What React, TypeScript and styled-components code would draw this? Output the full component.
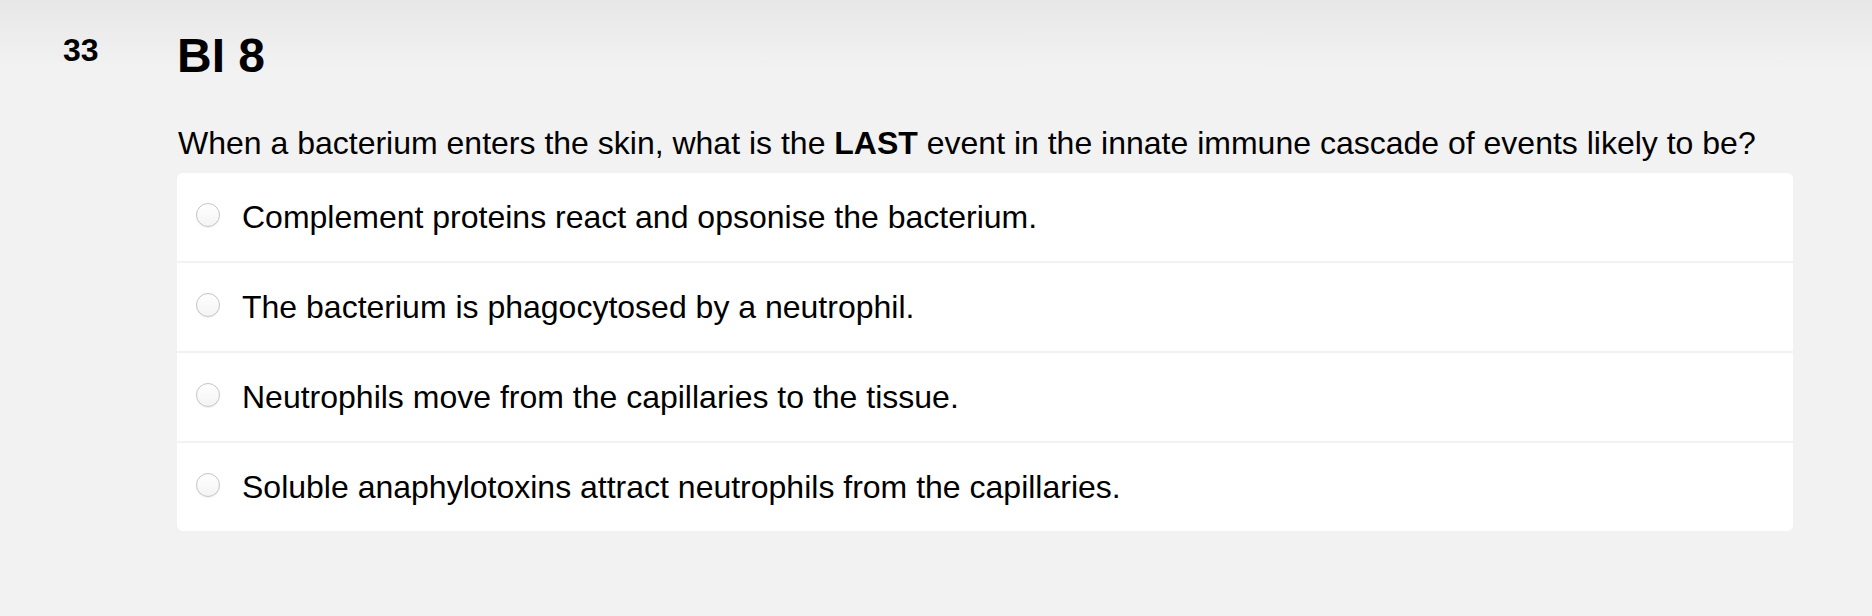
import { useState } from "react";
import styled, { createGlobalStyle } from "styled-components";

const GlobalStyle = createGlobalStyle`
  html, body {
    margin: 0;
    padding: 0;
  }
  body {
    background: linear-gradient(to bottom, #e7e7e7 0px, #f2f2f2 70px, #f2f2f2 100%);
    background-color: #f2f2f2;
    min-height: 616px;
    font-family: "Liberation Sans", Arial, sans-serif;
    color: #000;
  }
`;

const Page = styled.div`
  display: grid;
  grid-template-columns: 114px 1616px;
  padding: 28px 0 0 63px;
`;

const Number = styled.div`
  font-size: 32px;
  font-weight: 700;
  line-height: 40px;
  margin-top: 2px;
`;

const Content = styled.div`
  display: flex;
  flex-direction: column;
`;

const Title = styled.h1`
  margin: 0;
  font-size: 48px;
  font-weight: 700;
  line-height: 56px;
`;

const Question = styled.p`
  margin: 39px 0 10px 1px;
  font-size: 32px;
  line-height: 40px;
`;

const Card = styled.div`
  background: #fff;
  border-radius: 6px;
  display: flex;
  flex-direction: column;
  overflow: hidden;
`;

const Option = styled.label<{ $first?: boolean }>`
  display: flex;
  align-items: center;
  height: 88px;
  padding-left: 19px;
  gap: 22px;
  cursor: pointer;
  border-top: ${(p) => (p.$first ? "none" : "2px solid #f2f2f2")};
`;

const Radio = styled.span<{ $checked: boolean }>`
  width: 24px;
  height: 24px;
  box-sizing: border-box;
  border-radius: 50%;
  border: 1px solid #c4c4c4;
  background: linear-gradient(to bottom, #ffffff 0%, #f4f4f4 100%);
  box-shadow: inset 0 1px 1px rgba(255, 255, 255, 0.9), 0 1px 1px rgba(0, 0, 0, 0.06);
  margin-top: -5px;
  flex-shrink: 0;
  display: flex;
  align-items: center;
  justify-content: center;

  &::after {
    content: "";
    width: 10px;
    height: 10px;
    border-radius: 50%;
    background: #333;
    display: ${(p) => (p.$checked ? "block" : "none")};
  }
`;

const OptionText = styled.span`
  font-size: 32px;
  line-height: 38px;
`;

const options = [
  "Complement proteins react and opsonise the bacterium.",
  "The bacterium is phagocytosed by a neutrophil.",
  "Neutrophils move from the capillaries to the tissue.",
  "Soluble anaphylotoxins attract neutrophils from the capillaries.",
];

export default function App() {
  const [selected, setSelected] = useState<number | null>(null);

  return (
    <>
      <GlobalStyle />
      <Page>
        <Number>33</Number>
        <Content>
          <Title>BI 8</Title>
          <Question>
            When a bacterium enters the skin, what is the <b>LAST</b> event in the innate
            immune cascade of events likely to be?
          </Question>
          <Card>
            {options.map((opt, i) => (
              <Option key={opt} $first={i === 0} onClick={() => setSelected(i)}>
                <Radio $checked={selected === i} />
                <OptionText>{opt}</OptionText>
              </Option>
            ))}
          </Card>
        </Content>
      </Page>
    </>
  );
}
